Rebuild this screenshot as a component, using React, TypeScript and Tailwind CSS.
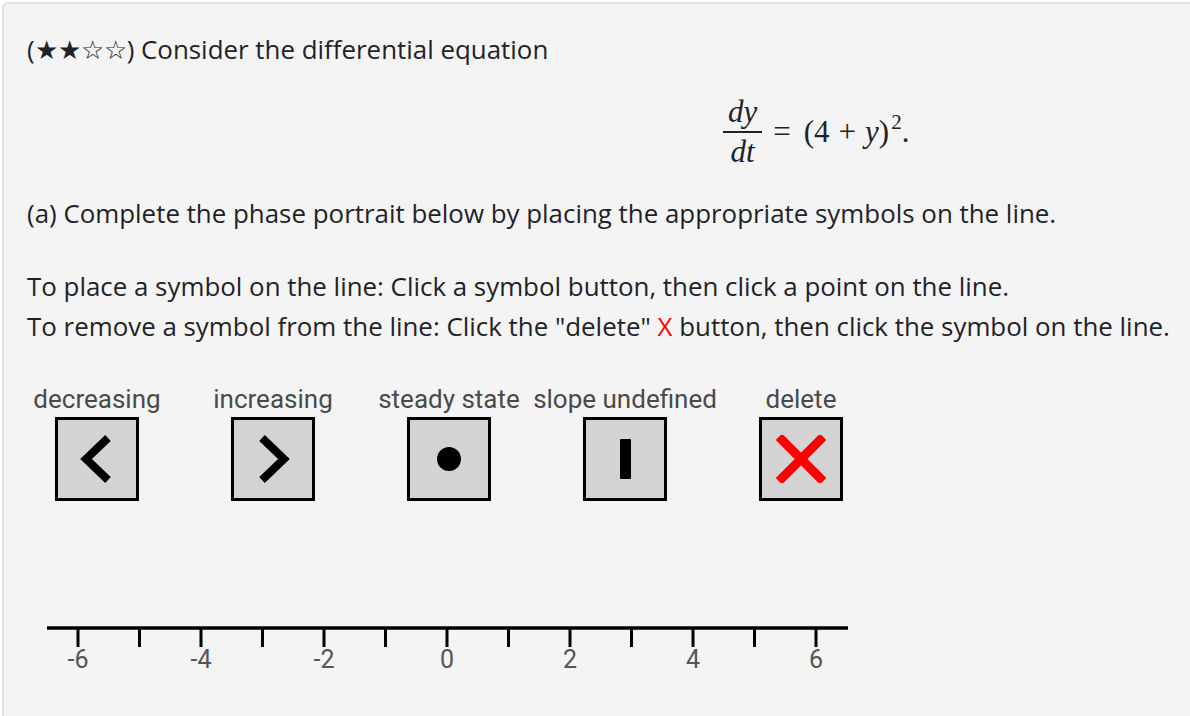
import React from "react";

const sans = { fontFamily: '"Open Sans", "Noto Sans", sans-serif' };

function Chevron({ dir }: { dir: "left" | "right" }) {
  const d = dir === "left" ? "M50 18 L28 39 L50 60" : "M28 18 L50 39 L28 60";
  return (
    <svg width="78" height="78" viewBox="0 0 78 78" className="block">
      <path d={d} fill="none" stroke="#000" strokeWidth="8" strokeLinecap="butt" strokeLinejoin="miter" />
    </svg>
  );
}

function Box({ children }: { children: React.ReactNode }) {
  return (
    <div className="w-[84px] h-[84px] border-[3px] border-black bg-[#d3d3d3] flex items-center justify-center">
      {children}
    </div>
  );
}

const buttons: { label: string; icon: React.ReactNode }[] = [
  { label: "decreasing", icon: <Chevron dir="left" /> },
  { label: "increasing", icon: <Chevron dir="right" /> },
  { label: "steady state", icon: <div className="w-[24px] h-[24px] rounded-full bg-black" /> },
  { label: "slope undefined", icon: <div className="w-[11px] h-[40px] bg-black rounded-[1px]" /> },
  {
    label: "delete",
    icon: (
      <svg width="50" height="48" viewBox="0 0 50 48" className="block">
        <path d="M6 5 L44 43 M44 5 L6 43" stroke="#ff0000" strokeWidth="9" strokeLinecap="square" />
      </svg>
    ),
  },
];

function NumberLine() {
  const x = (v: number) => 447 + 61.5 * v;
  const ticks = [-6, -5, -4, -3, -2, -1, 0, 1, 2, 3, 4, 5, 6];
  return (
    <svg width="880" height="70" viewBox="0 610 880 70" className="block">
      <line x1="47" y1="628" x2="848" y2="628" stroke="#000" strokeWidth="3.5" />
      {ticks.map((t) => (
        <line key={t} x1={x(t)} y1="628" x2={x(t)} y2="647" stroke="#000" strokeWidth="3" />
      ))}
      {[-6, -4, -2, 0, 2, 4, 6].map((t) => (
        <text
          key={t}
          x={x(t)}
          y="668"
          textAnchor="middle"
          fontSize="25"
          fill="#555"
          style={{ fontFamily: "Roboto, Arial, sans-serif" }}
        >
          {t}
        </text>
      ))}
    </svg>
  );
}

export default function App() {
  return (
    <div className="w-[1190px] h-[716px] overflow-hidden bg-white relative">
      <div
        className="ml-[2px] mt-[2px] w-[1700px] h-[900px] border-2 border-[#e2e2e2] rounded-tl-[6px] bg-[#f4f4f4] text-[#1f2328] text-[25.9px] leading-[40px]"
        style={sans}
      >
        <div className="pl-[23px] pt-[25px]">
          <div>(★★☆☆) Consider the differential equation</div>
          <div className="h-[124px] flex items-center pl-[696px]" style={{ fontFamily: '"Liberation Serif", "Times New Roman", serif' }}>
            <div className="flex items-center text-[31px] leading-none">
              <div className="flex flex-col items-center">
                <div className="italic px-[5px] pb-[4px]">dy</div>
                <div className="h-[2px] w-full bg-[#1f2328]" />
                <div className="italic px-[5px] pt-[3px]">dt</div>
              </div>
              <div className="ml-[11px] flex items-baseline">
                <span>=</span>
                <span className="ml-[13px]">(4</span>
                <span className="ml-[9px]">+</span>
                <span className="ml-[9px] italic">y</span>
                <span>)</span>
                <span className="text-[21px] relative top-[-13px] ml-[2px]">2</span>
                <span>.</span>
              </div>
            </div>
          </div>
          <div>(a) Complete the phase portrait below by placing the appropriate symbols on the line.</div>
          <div className="h-[33px]" />
          <div>To place a symbol on the line: Click a symbol button, then click a point on the line.</div>
          <div>
            To remove a symbol from the line: Click the "delete" <span className="text-[#ff0000]">X</span> button, then
            click the symbol on the line.
          </div>
        </div>
        <div className="flex mt-[38px] ml-[5px]">
          {buttons.map((b) => (
            <div key={b.label} className="w-[176px] flex flex-col items-center">
              <div
                className="whitespace-nowrap text-[26px] leading-[30px] text-[#4a4a4a] mb-[3px]"
                style={{ fontFamily: "Roboto, Arial, sans-serif" }}
              >
                {b.label}
              </div>
              <Box>{b.icon}</Box>
            </div>
          ))}
        </div>
        <div className="mt-[109px] ml-[-4px]">
          <NumberLine />
        </div>
      </div>
    </div>
  );
}
